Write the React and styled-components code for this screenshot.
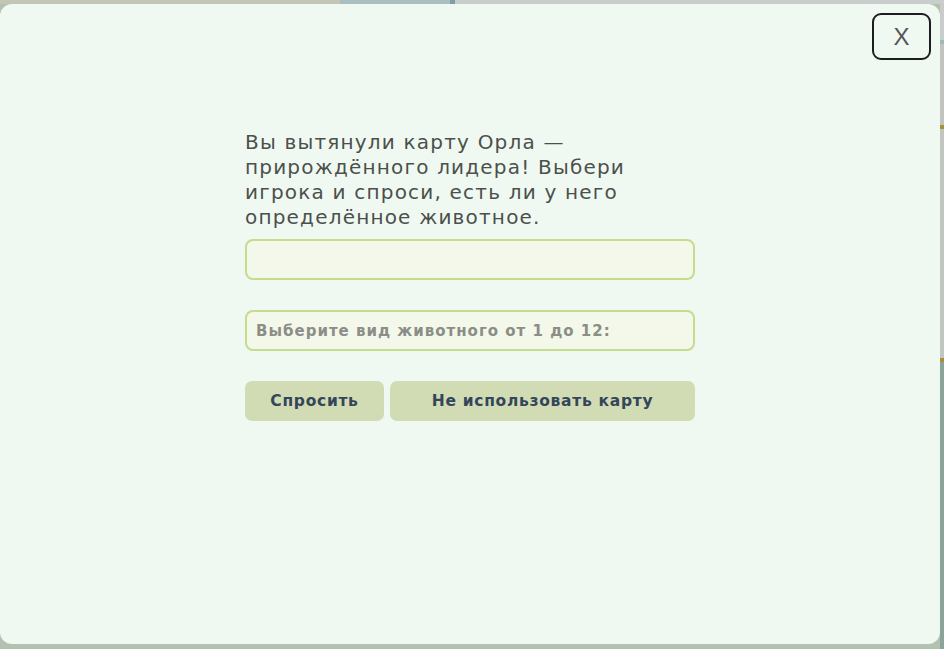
import styled, { createGlobalStyle } from "styled-components";

const GlobalStyle = createGlobalStyle`
  html, body {
    margin: 0;
    height: 100%;
  }
  body {
    font-family: "DejaVu Sans", "Noto Sans", sans-serif;
    background: #b5c3b4;
  }
  #root {
    height: 100%;
  }
`;

//--------------- Backdrop ---------------
const Overlay = styled.div`
  height: 100%;
  display: flex;
  align-items: flex-start;
  padding: 4px 4px 5px 0;
  box-sizing: border-box;
  background:
    linear-gradient(90deg, #c3c5b6 0 340px, #a9bfc0 340px 450px, #7f9ea3 450px 455px, #c9cdcc 455px 100%) top / 100% 4px no-repeat,
    linear-gradient(180deg, #c9cccb 0 40px, #9fb8b8 40px 44px, #c0c4bc 44px 125px, #a8903a 125px 129px, #c2c6c0 129px 358px, #a8903a 358px 362px, #8aa39b 362px 100%) right / 4px 100% no-repeat,
    #b3c2b0;
`;

const Modal = styled.div`
  position: relative;
  width: 940px;
  height: 640px;
  background: #f0f9f1;
  border-radius: 12px;
  display: flex;
  justify-content: center;
  padding-top: 126px;
  box-sizing: border-box;
`;

const CloseButton = styled.button`
  position: absolute;
  top: 9px;
  right: 9px;
  width: 59px;
  height: 47px;
  border: 2px solid #1d1d1d;
  border-radius: 9px;
  background: transparent;
  color: #555;
  font-family: "Liberation Sans", sans-serif;
  font-size: 24px;
  cursor: pointer;
`;

//--------------- Content ---------------
const Content = styled.div`
  width: 450px;
  display: flex;
  flex-direction: column;
`;

const Message = styled.p`
  margin: 0 0 9px;
  color: #4b504c;
  font-size: 20px;
  line-height: 25px;
  letter-spacing: 1.2px;
  white-space: nowrap;
`;

const Field = styled.input`
  height: 41px;
  box-sizing: border-box;
  margin-bottom: ${(props) => props.gap}px;
  padding: 0 9px;
  border: 2px solid #c4dc8c;
  border-radius: 8px;
  background: #f3f8ea;
  font-family: inherit;
  font-size: 15px;
  font-weight: bold;
  letter-spacing: 1px;
  color: #444;
  outline: none;

  &::placeholder {
    color: #8b8d87;
  }
`;

const ButtonRow = styled.div`
  display: flex;
  gap: 6px;
`;

const Button = styled.button`
  flex: ${(props) => props.grow};
  height: 40px;
  border: none;
  border-radius: 7px;
  background: #d2dcb4;
  color: #34465a;
  font-family: inherit;
  font-size: 15.5px;
  font-weight: bold;
  letter-spacing: 0.7px;
  cursor: pointer;
`;

const App = () => {
  return (
    <>
      <GlobalStyle />
      <Overlay>
        <Modal>
          <CloseButton>X</CloseButton>
          <Content>
            <Message>
              Вы вытянули карту Орла —<br />
              прирождённого лидера! Выбери<br />
              игрока и спроси, есть ли у него<br />
              определённое животное.
            </Message>
            <Field gap={30} />
            <Field gap={30} placeholder="Выберите вид животного от 1 до 12:" />
            <ButtonRow>
              <Button grow="0 0 139px">Спросить</Button>
              <Button grow="1">Не использовать карту</Button>
            </ButtonRow>
          </Content>
        </Modal>
      </Overlay>
    </>
  );
};

export default App;
